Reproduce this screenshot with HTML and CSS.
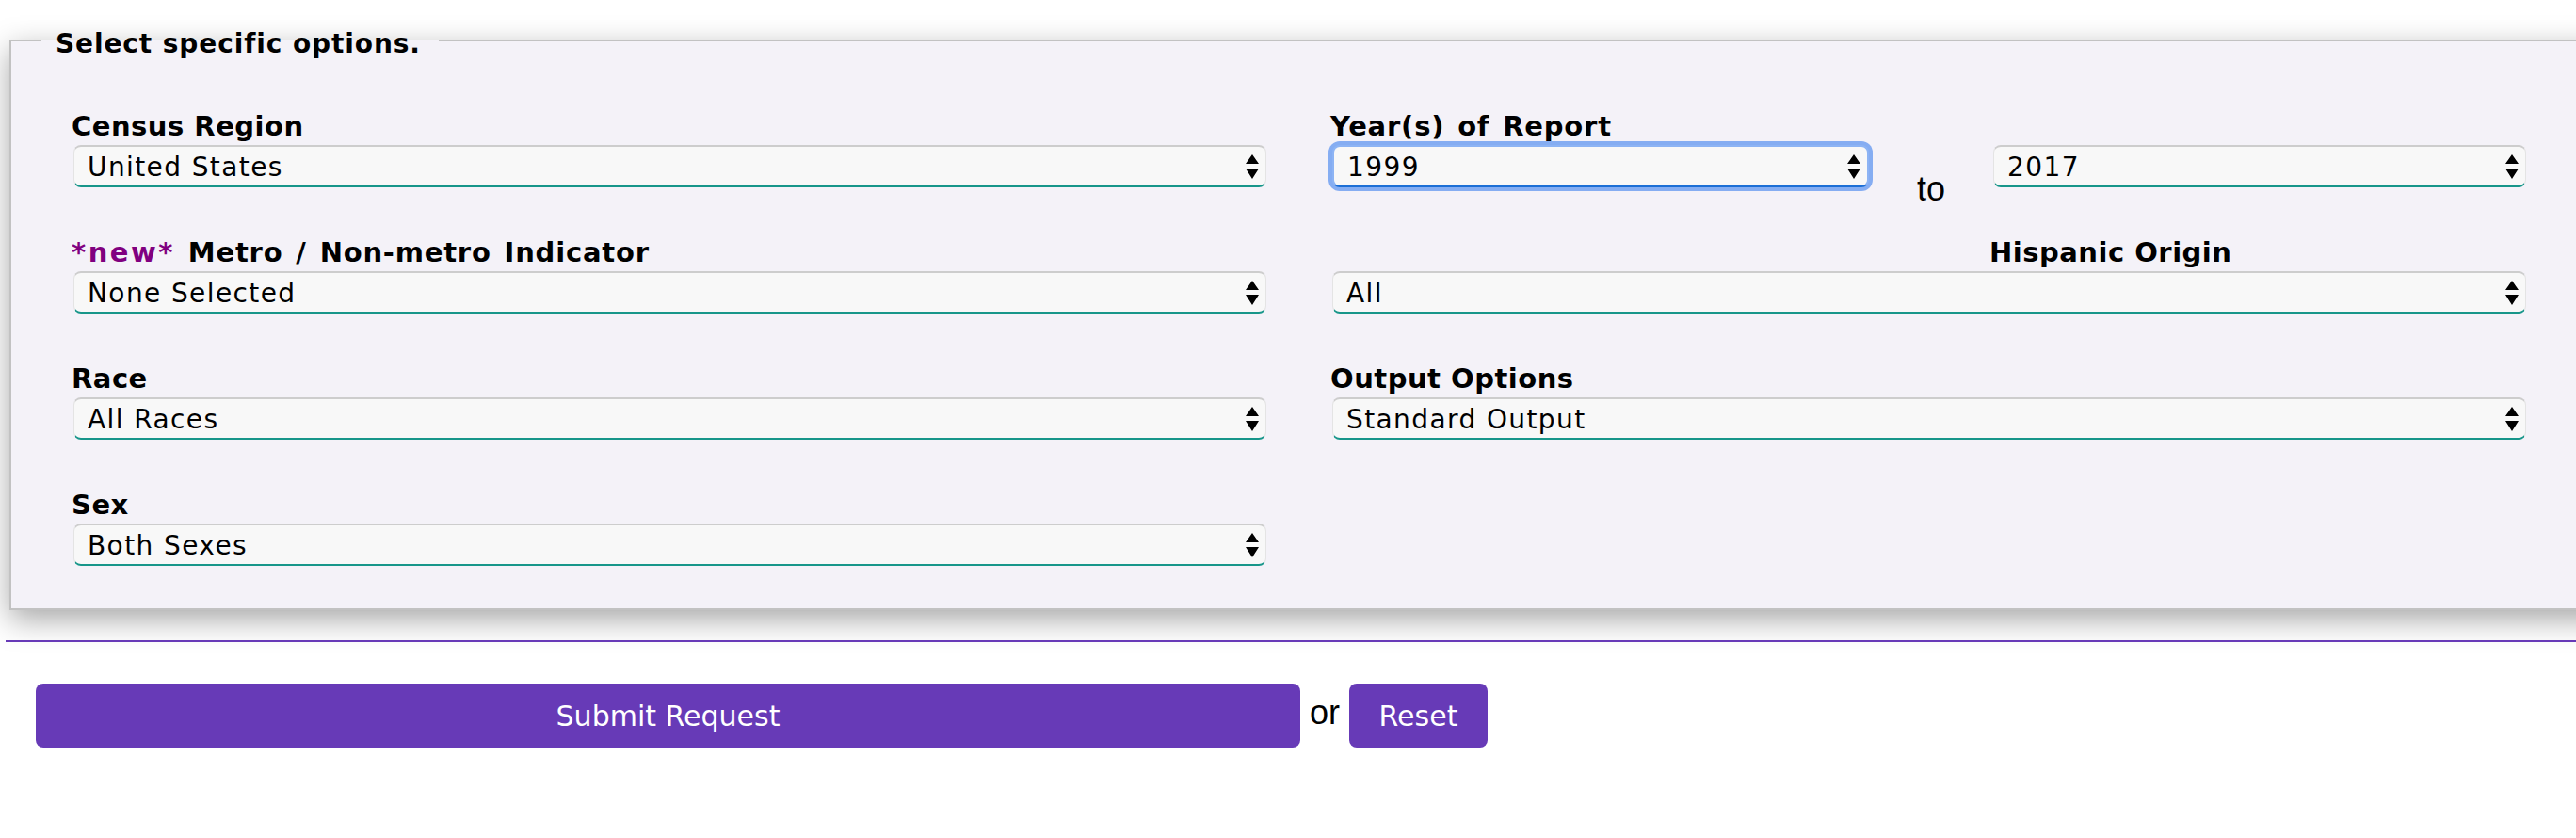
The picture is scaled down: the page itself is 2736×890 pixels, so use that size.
FILE: index.html
```html
<!DOCTYPE html>
<html lang="en">
<head>
<meta charset="utf-8">
<title>Select specific options</title>
<link rel="stylesheet" href="styles.css">
</head>
<body>
<form class="request">
  <fieldset class="options">
    <legend class="options-title">Select specific options.</legend>
    <div class="options-grid">
      <div class="field">
        <label class="field-label" for="region">Census Region</label>
        <select id="region" class="field-select"><option>United States</option></select>
      </div>
      <div class="field">
        <label class="field-label field-label--punct" for="year-from">Year(s) of Report</label>
        <div class="year-range">
          <select id="year-from" class="field-select is-focused"><option>1999</option></select>
          <span class="year-to">to</span>
          <select id="year-to" class="field-select"><option>2017</option></select>
        </div>
      </div>
      <div class="field">
        <label class="field-label field-label--punct" for="metro"><span class="new-tag">*new*</span> Metro / Non-metro Indicator</label>
        <select id="metro" class="field-select"><option>None Selected</option></select>
      </div>
      <div class="field">
        <label class="field-label field-label--aligned" for="hispanic">Hispanic Origin</label>
        <select id="hispanic" class="field-select"><option>All</option></select>
      </div>
      <div class="field">
        <label class="field-label" for="race">Race</label>
        <select id="race" class="field-select"><option>All Races</option></select>
      </div>
      <div class="field">
        <label class="field-label" for="output">Output Options</label>
        <select id="output" class="field-select"><option>Standard Output</option></select>
      </div>
      <div class="field">
        <label class="field-label" for="sex">Sex</label>
        <select id="sex" class="field-select"><option>Both Sexes</option></select>
      </div>
    </div>
  </fieldset>
  <hr class="actions-rule">
  <div class="actions">
    <button type="submit" class="btn btn-submit">Submit Request</button>
    <span class="actions-or">or</span>
    <button type="reset" class="btn btn-reset">Reset</button>
  </div>
</form>
</body>
</html>
```

FILE: styles.css
```css
html, body {
  margin: 0;
  padding: 0;
  background: #ffffff;
  overflow: hidden;
}

body {
  font-family: "DejaVu Sans", Verdana, sans-serif;
  color: #000000;
}

.request {
  padding-top: 23px;
}

.options {
  margin: 0 -120px 0 10px;
  padding: 54px 0 45px 32px;
  border: 2px solid #c2c2c2;
  background: #f4f2f8;
  box-shadow: 0 10px 30px rgba(0, 0, 0, 0.35);
}

.options-title {
  padding: 7px 19px 0 15px;
  font-size: 28px;
  font-weight: bold;
  line-height: 33px;
  letter-spacing: 0.9px;
}

.options-grid {
  display: grid;
  grid-template-columns: 1269px 1270px;
  column-gap: 68px;
  row-gap: 52px;
  margin-left: 32px;
}

.field-label {
  display: block;
  margin-bottom: 3px;
  font-size: 29px;
  font-weight: bold;
  line-height: 34px;
  letter-spacing: 0.5px;
}

.field-label--punct {
  word-spacing: 3px;
  letter-spacing: 0.8px;
}

.field-label--aligned {
  padding-left: 700px;
}

.new-tag {
  color: #800080;
  letter-spacing: 2.5px;
}

.field-select {
  display: block;
  box-sizing: border-box;
  width: calc(100% - 2px);
  height: 45px;
  margin: 0 0 0 2px;
  padding: 2px 44px 0 14px;
  -webkit-appearance: none;
  appearance: none;
  font-family: "DejaVu Sans", Verdana, sans-serif;
  font-size: 28px;
  letter-spacing: 1.4px;
  color: #000000;
  background-color: #f8f8f8;
  background-image: url("data:image/svg+xml,%3Csvg xmlns='http://www.w3.org/2000/svg' width='14' height='26' viewBox='0 0 14 26'%3E%3Cpath d='M7 0L14 10H0Z M0 15H14L7 26Z' fill='%23000'/%3E%3C/svg%3E");
  background-repeat: no-repeat;
  background-position: right 7px center;
  border-style: solid;
  border-width: 2px 1px 2px 1px;
  border-color: #cdcdcd #e4e4e4 #17968a #e4e4e4;
  border-radius: 8px;
  outline: none;
}

.field-select.is-focused {
  border-width: 2px;
  border-color: #8db4f4 #8db4f4 #1c6fd6 #8db4f4;
  box-shadow: 0 0 0 4px rgba(96, 150, 240, 0.75);
}

.year-range {
  display: grid;
  grid-template-columns: 570px 132px 566px;
  align-items: start;
  height: 45px;
  margin-left: 2px;
}

.year-range .field-select {
  width: 100%;
  margin: 0;
}

.year-to {
  justify-self: center;
  margin-top: 26px;
  font-family: "Liberation Sans", Arial, sans-serif;
  font-size: 36px;
  line-height: 41px;
}

.actions-rule {
  height: 0;
  margin: 32px 0 0 6px;
  border: 0;
  border-top: 2px solid #673ab7;
}

.actions {
  display: flex;
  align-items: center;
  margin: 44px 0 0 38px;
}

.btn {
  height: 68px;
  padding: 0;
  border: 0;
  border-radius: 8px;
  background: #673ab7;
  color: #ffffff;
  font-family: "DejaVu Sans", Verdana, sans-serif;
  font-size: 30px;
}

.btn-submit {
  width: 1343px;
}

.btn-reset {
  width: 147px;
}

.actions-or {
  margin: 0 10px 8px 10px;
  font-family: "Liberation Sans", Arial, sans-serif;
  font-size: 36px;
  line-height: 41px;
}
```
